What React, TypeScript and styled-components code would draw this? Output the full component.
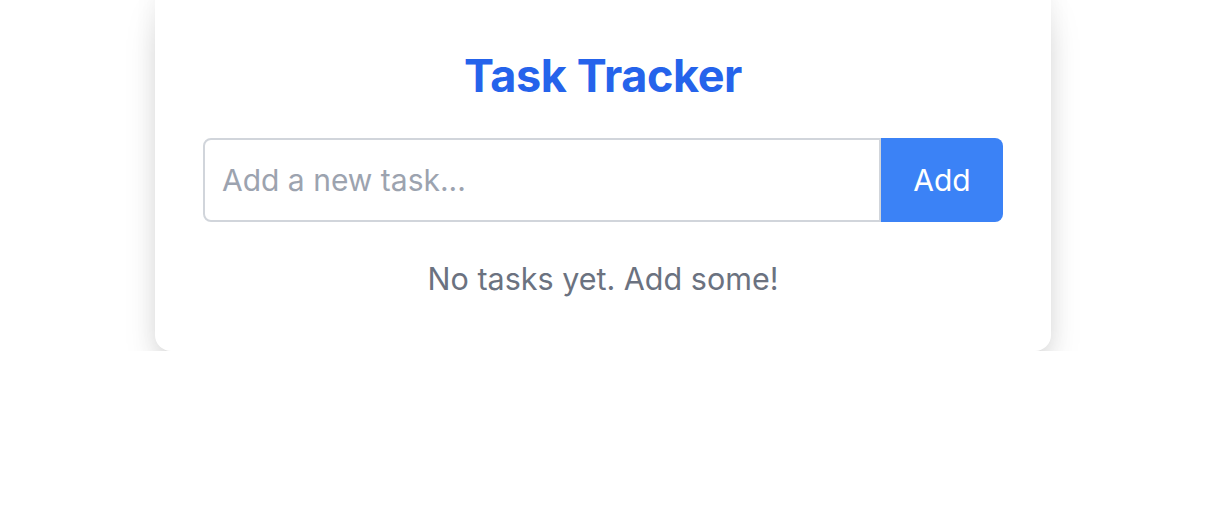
import React, { useState } from "react";
import styled, { createGlobalStyle } from "styled-components";

const Global = createGlobalStyle`
  html, body { margin: 0; padding: 0; background: #ffffff; }
  body { font-family: Inter, "Helvetica Neue", Arial, sans-serif; }
  * { box-sizing: border-box; }
`;

const Page = styled.div`
  display: flex;
  justify-content: center;
  padding-right: 8px;
  margin-top: -20px;
`;

const Card = styled.div`
  width: 896px;
  background: #ffffff;
  border-radius: 16px;
  box-shadow: 0 26px 40px -14px rgba(0, 0, 0, 0.28), 0 4px 24px rgba(0, 0, 0, 0.05);
  padding: 68px 48px 52px;
  display: flex;
  flex-direction: column;
  align-items: stretch;
`;

const Title = styled.h1`
  margin: 0 0 34px;
  text-align: center;
  font-size: 45px;
  line-height: 56px;
  font-weight: 700;
  color: #2563eb;
  letter-spacing: -0.4px;
`;

const Form = styled.form`
  display: flex;
  height: 84px;
  margin-bottom: 37px;
`;

const Input = styled.input`
  flex: 1;
  min-width: 0;
  height: 100%;
  border: 2px solid #d1d5db;
  border-radius: 8px 0 0 8px;
  padding: 0 17px;
  font-family: inherit;
  font-size: 30px;
  color: #111827;
  outline: none;
  &::placeholder { color: #9ca3af; }
`;

const Button = styled.button`
  width: 122px;
  height: 100%;
  border: none;
  border-radius: 0 8px 8px 0;
  background: #3b82f6;
  color: #ffffff;
  font-family: inherit;
  font-size: 30px;
  cursor: pointer;
`;

const Empty = styled.p`
  margin: 0;
  text-align: center;
  font-size: 30.5px;
  line-height: 40px;
  color: #6b7280;
`;

export default function App() {
  const [value, setValue] = useState("");
  return (
    <>
      <Global />
      <Page>
        <Card>
          <Title>Task Tracker</Title>
          <Form onSubmit={(e) => e.preventDefault()}>
            <Input
              placeholder="Add a new task..."
              value={value}
              onChange={(e) => setValue(e.target.value)}
            />
            <Button type="submit">Add</Button>
          </Form>
          <Empty>No tasks yet. Add some!</Empty>
        </Card>
      </Page>
    </>
  );
}
